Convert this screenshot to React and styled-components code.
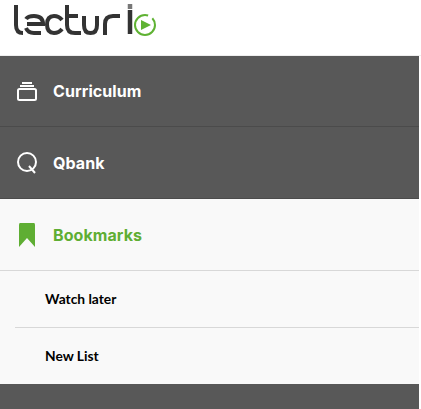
import styled, { createGlobalStyle } from 'styled-components';

const GlobalStyle = createGlobalStyle`
    html, body {
        margin: 0;
        padding: 0;
        background: #fff;
    }
`

const Page = styled.div`
    width: 421px;
    height: 409px;
    overflow: hidden;
    background: #fff;
`

const Header = styled.header`
    padding: 4px 0 0 13px;
    height: 51px;
    border-bottom: 1px solid #eee;
`

const Menu = styled.nav`
    width: 419px;
    display: flex;
    flex-direction: column;
`

const MenuRow = styled.div`
    height: ${p => p.$height}px;
    display: flex;
    align-items: center;
    background: ${p => p.$active ? '#f9f9f9' : '#585858'};
    border-bottom: 1px solid ${p => p.$active ? '#d8d8d8' : '#4b4b4b'};
    box-sizing: border-box;
`

const IconSlot = styled.div`
    width: 53px;
    padding-left: 17px;
    box-sizing: border-box;
    display: flex;
`

const Label = styled.span`
    font-family: "Inter", "Liberation Sans", sans-serif;
    font-weight: 700;
    font-size: 16px;
    letter-spacing: 0.08px;
    color: ${p => p.$active ? '#5fae33' : '#fff'};
`

const SubList = styled.div`
    background: #f9f9f9;
    padding-left: 15px;
`

const SubRow = styled.div`
    height: ${p => p.$height}px;
    display: flex;
    align-items: center;
    padding: 0 0 1px 30px;
    box-sizing: border-box;
    font-family: "Lato", "Liberation Sans", sans-serif;
    font-weight: 700;
    font-size: 13.8px;
    color: #000;
    border-bottom: ${p => p.$line ? '1px solid #d8d8d8' : 'none'};
`

const Footer = styled.div`
    height: 25px;
    background: #585858;
`

const Logo = () => (
    <svg width="146" height="34" viewBox="13 4 146 34" fill="none">
        <g stroke="#333" strokeWidth="4">
            <path d="M16 5 V25 Q16 33 23 33" />
            <path d="M27 24 H43 Q43 16 34 16 Q28 16 26 19 M26 28 Q28 33 34 33 H41" />
            <path d="M62 20 Q59 16 54 16 Q47 16 47 24.5 Q47 33 54 33 Q59 33 62 29" />
            <path d="M67 5 V25 Q67 33 75 33 H81 M67 16 H78" />
            <path d="M84 16 V25 Q84 33 90.5 33 Q97 33 97 25 V16" />
            <path d="M105 35 V24 Q105 16 113 16 H120" />
            <path d="M130 10 V34" strokeWidth="4.5" />
        </g>
        <path d="M130 4 V9" stroke="#777" strokeWidth="4.5" />
        <circle cx="145" cy="25" r="10" stroke="#5fb233" strokeWidth="2" strokeDasharray="50 5" />
        <path d="M141 20 L151 25 L141 30 Z" fill="#5fb233" />
    </svg>
);

const CardsIcon = () => (
    <svg width="20" height="20" viewBox="0 0 20 20" fill="none" stroke="#fff" strokeWidth="2">
        <rect x="1" y="8" width="18" height="11" rx="1.5" />
        <path d="M3 5 H17 M5 2 H15" />
    </svg>
);

const QIcon = () => (
    <svg width="20" height="22" viewBox="0 0 20 22" fill="none" stroke="#fff" strokeWidth="2">
        <circle cx="10" cy="10" r="9" />
        <path d="M12 14 L18 21" />
    </svg>
);

const BookmarkIcon = () => (
    <svg width="20" height="24" viewBox="0 0 20 24" fill="#5fae33">
        <path d="M3 0 H17 Q18 0 18 2 V24 L10 15 L2 24 V2 Q2 0 3 0 Z" />
    </svg>
);

const App = () => {
    return (
        <Page>
            <GlobalStyle />
            <Header>
                <Logo />
            </Header>
            <Menu>
                <MenuRow $height={71}>
                    <IconSlot><CardsIcon /></IconSlot>
                    <Label>Curriculum</Label>
                </MenuRow>
                <MenuRow $height={72}>
                    <IconSlot><QIcon /></IconSlot>
                    <Label>Qbank</Label>
                </MenuRow>
                <MenuRow $height={72} $active>
                    <IconSlot><BookmarkIcon /></IconSlot>
                    <Label $active>Bookmarks</Label>
                </MenuRow>
                <SubList>
                    <SubRow $height={57} $line>Watch later</SubRow>
                    <SubRow $height={56}>New List</SubRow>
                </SubList>
                <Footer />
            </Menu>
        </Page>
    )
}

export default App;
